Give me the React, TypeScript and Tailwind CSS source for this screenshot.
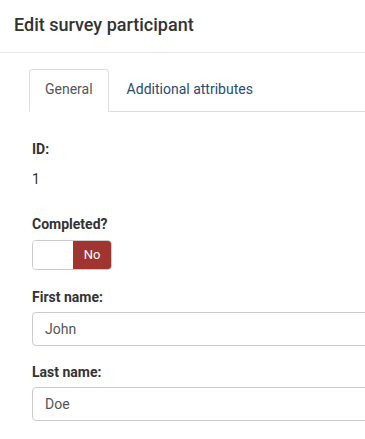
export default function App() {
  const label = "block text-[14px] leading-[20px] font-bold text-[#333]";
  return (
    <div className="w-full min-h-screen overflow-hidden bg-white font-['Roboto',sans-serif]">
      {/* Header */}
      <div className="pt-[14px] pb-[16px] px-[14px] border-b border-[#e6e6e6]">
        <h1 className="text-[18px] leading-[22px] font-medium text-[#333] whitespace-nowrap">Edit survey participant</h1>
      </div>

      {/* Tabs */}
      <div className="mt-[16px] ml-[29px] w-[600px] flex border-b border-[#ddd]">
        <div className="-mb-px pt-[9px] pb-[12px] px-[15px] border border-[#ddd] border-b-white rounded-t-[4px] bg-white text-[14px] leading-[20px] text-[#555]">
          General
        </div>
        <div className="ml-[2px] pt-[9px] pb-[11px] px-[15px] border border-transparent text-[14px] leading-[20px] text-[#2c4a6e] whitespace-nowrap">
          Additional attributes
        </div>
      </div>

      {/* Form */}
      <div className="pl-[32px] w-[700px]">
        <div className="mt-[27px]">
          <span className={label}>ID:</span>
          <div className="mt-[10px] text-[14px] leading-[20px] text-[#333]">1</div>
        </div>

        <div className="mt-[25px]">
          <span className={label}>Completed?</span>
          <div className="mt-[6px] flex w-[80px] h-[30px] border border-[#ccc] rounded-[4px] overflow-hidden">
            <div className="w-[40px] bg-white" />
            <div className="flex-1 bg-[#a0342f] flex items-center justify-center text-[13px] text-white">No</div>
          </div>
        </div>

        <div className="mt-[17px]">
          <span className={label}>First name:</span>
          <div className="mt-[5px] h-[34px] border border-[#ccc] rounded-[4px] px-[12px] flex items-center text-[14px] text-[#555]">
            John
          </div>
        </div>

        <div className="mt-[16px]">
          <span className={label}>Last name:</span>
          <div className="mt-[5px] h-[34px] border border-[#ccc] rounded-[4px] px-[12px] flex items-center text-[14px] text-[#555]">
            Doe
          </div>
        </div>
      </div>
    </div>
  );
}
